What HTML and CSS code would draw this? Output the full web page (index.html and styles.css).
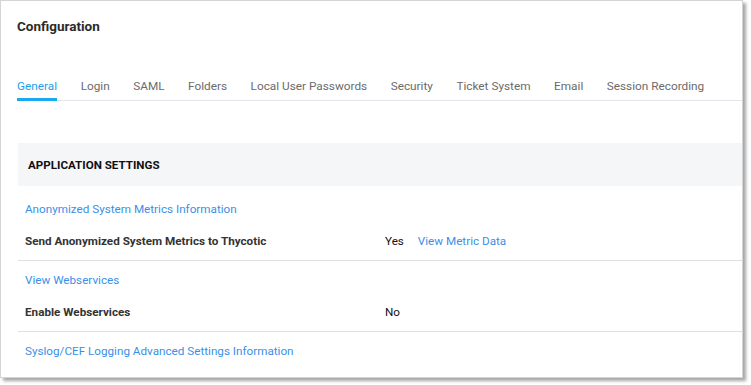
FILE: index.html
```html
<!DOCTYPE html>
<html>
<head>
<meta charset="utf-8">
<link rel="stylesheet" href="styles.css">
</head>
<body>
<div class="frame">
  <h1 class="title">Configuration</h1>
  <nav class="tabs">
    <span class="tab active">General</span>
    <span class="tab">Login</span>
    <span class="tab">SAML</span>
    <span class="tab">Folders</span>
    <span class="tab">Local User Passwords</span>
    <span class="tab">Security</span>
    <span class="tab">Ticket System</span>
    <span class="tab">Email</span>
    <span class="tab">Session Recording</span>
  </nav>
  <section class="settings">
    <div class="section-head">APPLICATION SETTINGS</div>
    <div class="group first">
      <a class="link">Anonymized System Metrics Information</a>
      <div class="row">
        <span class="label">Send Anonymized System Metrics to Thycotic</span>
        <span class="value">Yes <a class="link inline">View Metric Data</a></span>
      </div>
    </div>
    <div class="group">
      <a class="link">View Webservices</a>
      <div class="row">
        <span class="label">Enable Webservices</span>
        <span class="value">No</span>
      </div>
    </div>
    <div class="group last">
      <a class="link">Syslog/CEF Logging Advanced Settings Information</a>
    </div>
  </section>
</div>
</body>
</html>
```
FILE: styles.css
```css
html, body {
  margin: 0;
  padding: 0;
  background: #fff;
}
body {
  font-family: Roboto, "Liberation Sans", sans-serif;
  width: 751px;
  height: 385px;
  overflow: hidden;
}
.frame {
  box-sizing: border-box;
  width: 743px;
  height: 378px;
  border: 1px solid #d4d4d4;
  box-shadow: 3px 3px 3px rgba(0,0,0,0.35);
  padding: 0 0 0 16px;
  overflow: hidden;
}
.title {
  margin: 0;
  padding-top: 16px;
  height: 18px;
  font-size: 13.5px;
  font-weight: 700;
  color: #2b2b2b;
  line-height: 18px;
}
.tabs {
  display: flex;
  gap: 23.5px;
  margin-top: 42px;
  border-bottom: 1px solid #e2e6ea;
  height: 23px;
  white-space: nowrap;
}
.tab {
  font-size: 11.8px;
  color: #6b6b6b;
  line-height: 18px;
  height: 20px;
  box-sizing: border-box;
}
.tab.active {
  color: #1e9fe6;
  border-bottom: 3px solid #1aa8ee;
  height: 24px;
}
.settings {
  margin-top: 42px;
}
.section-head {
  margin-left: 1px;
  background: #f5f6f8;
  height: 43px;
  display: flex;
  align-items: center;
  padding-left: 10px;
  font-size: 11.6px;
  font-weight: 700;
  color: #111;
}
.group {
  margin-left: 1px;
  border-bottom: 1px solid #e0e0e0;
  padding: 11px 0 11px 7px;
  display: flex;
  flex-direction: column;
  gap: 16px;
  white-space: nowrap;
}
.group.first {
  padding-top: 15px;
}
.group.last {
  border-bottom: none;
}
.link {
  color: #3a8fe8;
  font-size: 11.7px;
  line-height: 16px;
}
.row {
  display: flex;
  font-size: 11.7px;
  line-height: 16px;
}
.label {
  width: 360px;
  font-weight: 700;
  color: #333;
}
.value {
  color: #111;
}
.link.inline {
  margin-left: 11px;
}
```
